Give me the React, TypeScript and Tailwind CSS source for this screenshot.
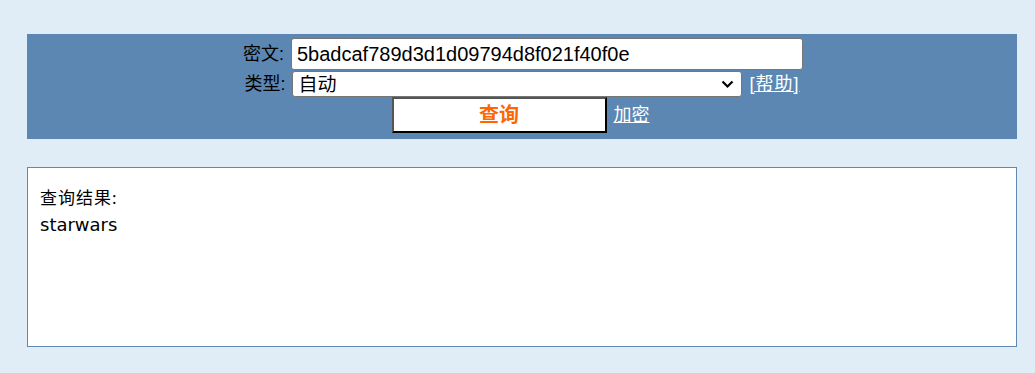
export default function App() {
  return (
    <div className="min-h-screen bg-[#e1edf6] pl-[27px] pr-[18px] pt-[34px] pb-[26px] text-black [font-family:'Liberation_Sans','Noto_Sans_CJK_SC',sans-serif] text-[18px]">
      <div className="bg-[#5b87b2] pt-[4px] pb-[6px] flex flex-col items-center">
        <div className="flex items-center justify-center h-[32px] pl-[2px]">
          <span className="mr-[7px]">密文:</span>
          <input
            className="w-[512px] h-[32px] bg-white border border-[#767676] rounded-[3px] px-[5px] text-[20px] outline-none"
            defaultValue="5badcaf789d3d1d09794d8f021f40f0e"
          />
        </div>
        <div className="flex items-center justify-center h-[27px] pt-[1px]">
          <span className="mr-[6px]">类型:</span>
          <div className="relative w-[450px] h-[26px]">
            <select className="appearance-none w-full h-full bg-white border border-[#767676] rounded-[3px] pl-[6px] text-[19px] leading-none outline-none">
              <option>自动</option>
            </select>
            <svg className="absolute right-[8px] top-[9px] pointer-events-none" width="13" height="9" viewBox="0 0 13 9">
              <path d="M1.5 1.5 L6.5 6.5 L11.5 1.5" fill="none" stroke="#000" strokeWidth="2.2" />
            </svg>
          </div>
          <a className="ml-[8px] text-white underline cursor-pointer tracking-[1px]">[帮助]</a>
        </div>
        <div className="flex items-center justify-center h-[36px] pr-[3px]">
          <button className="w-[215px] h-[36px] bg-white border-2 border-t-[#555] border-l-[#555] border-b-black border-r-black text-[#ff6600] font-bold text-[20px]">
            查询
          </button>
          <a className="ml-[7px] text-white underline cursor-pointer">加密</a>
        </div>
      </div>
      <div className="mt-[28px] bg-white border border-[#5f89b5] h-[180px] px-[12px] pt-[15px] leading-[29px] text-[17px] [font-family:'Noto_Sans','Noto_Sans_CJK_SC',sans-serif]">
        <div className="tracking-[1px]">查询结果:</div>
        <div className="text-[18px] leading-[26px] [font-family:'DejaVu_Sans',sans-serif]">starwars</div>
      </div>
    </div>
  );
}
